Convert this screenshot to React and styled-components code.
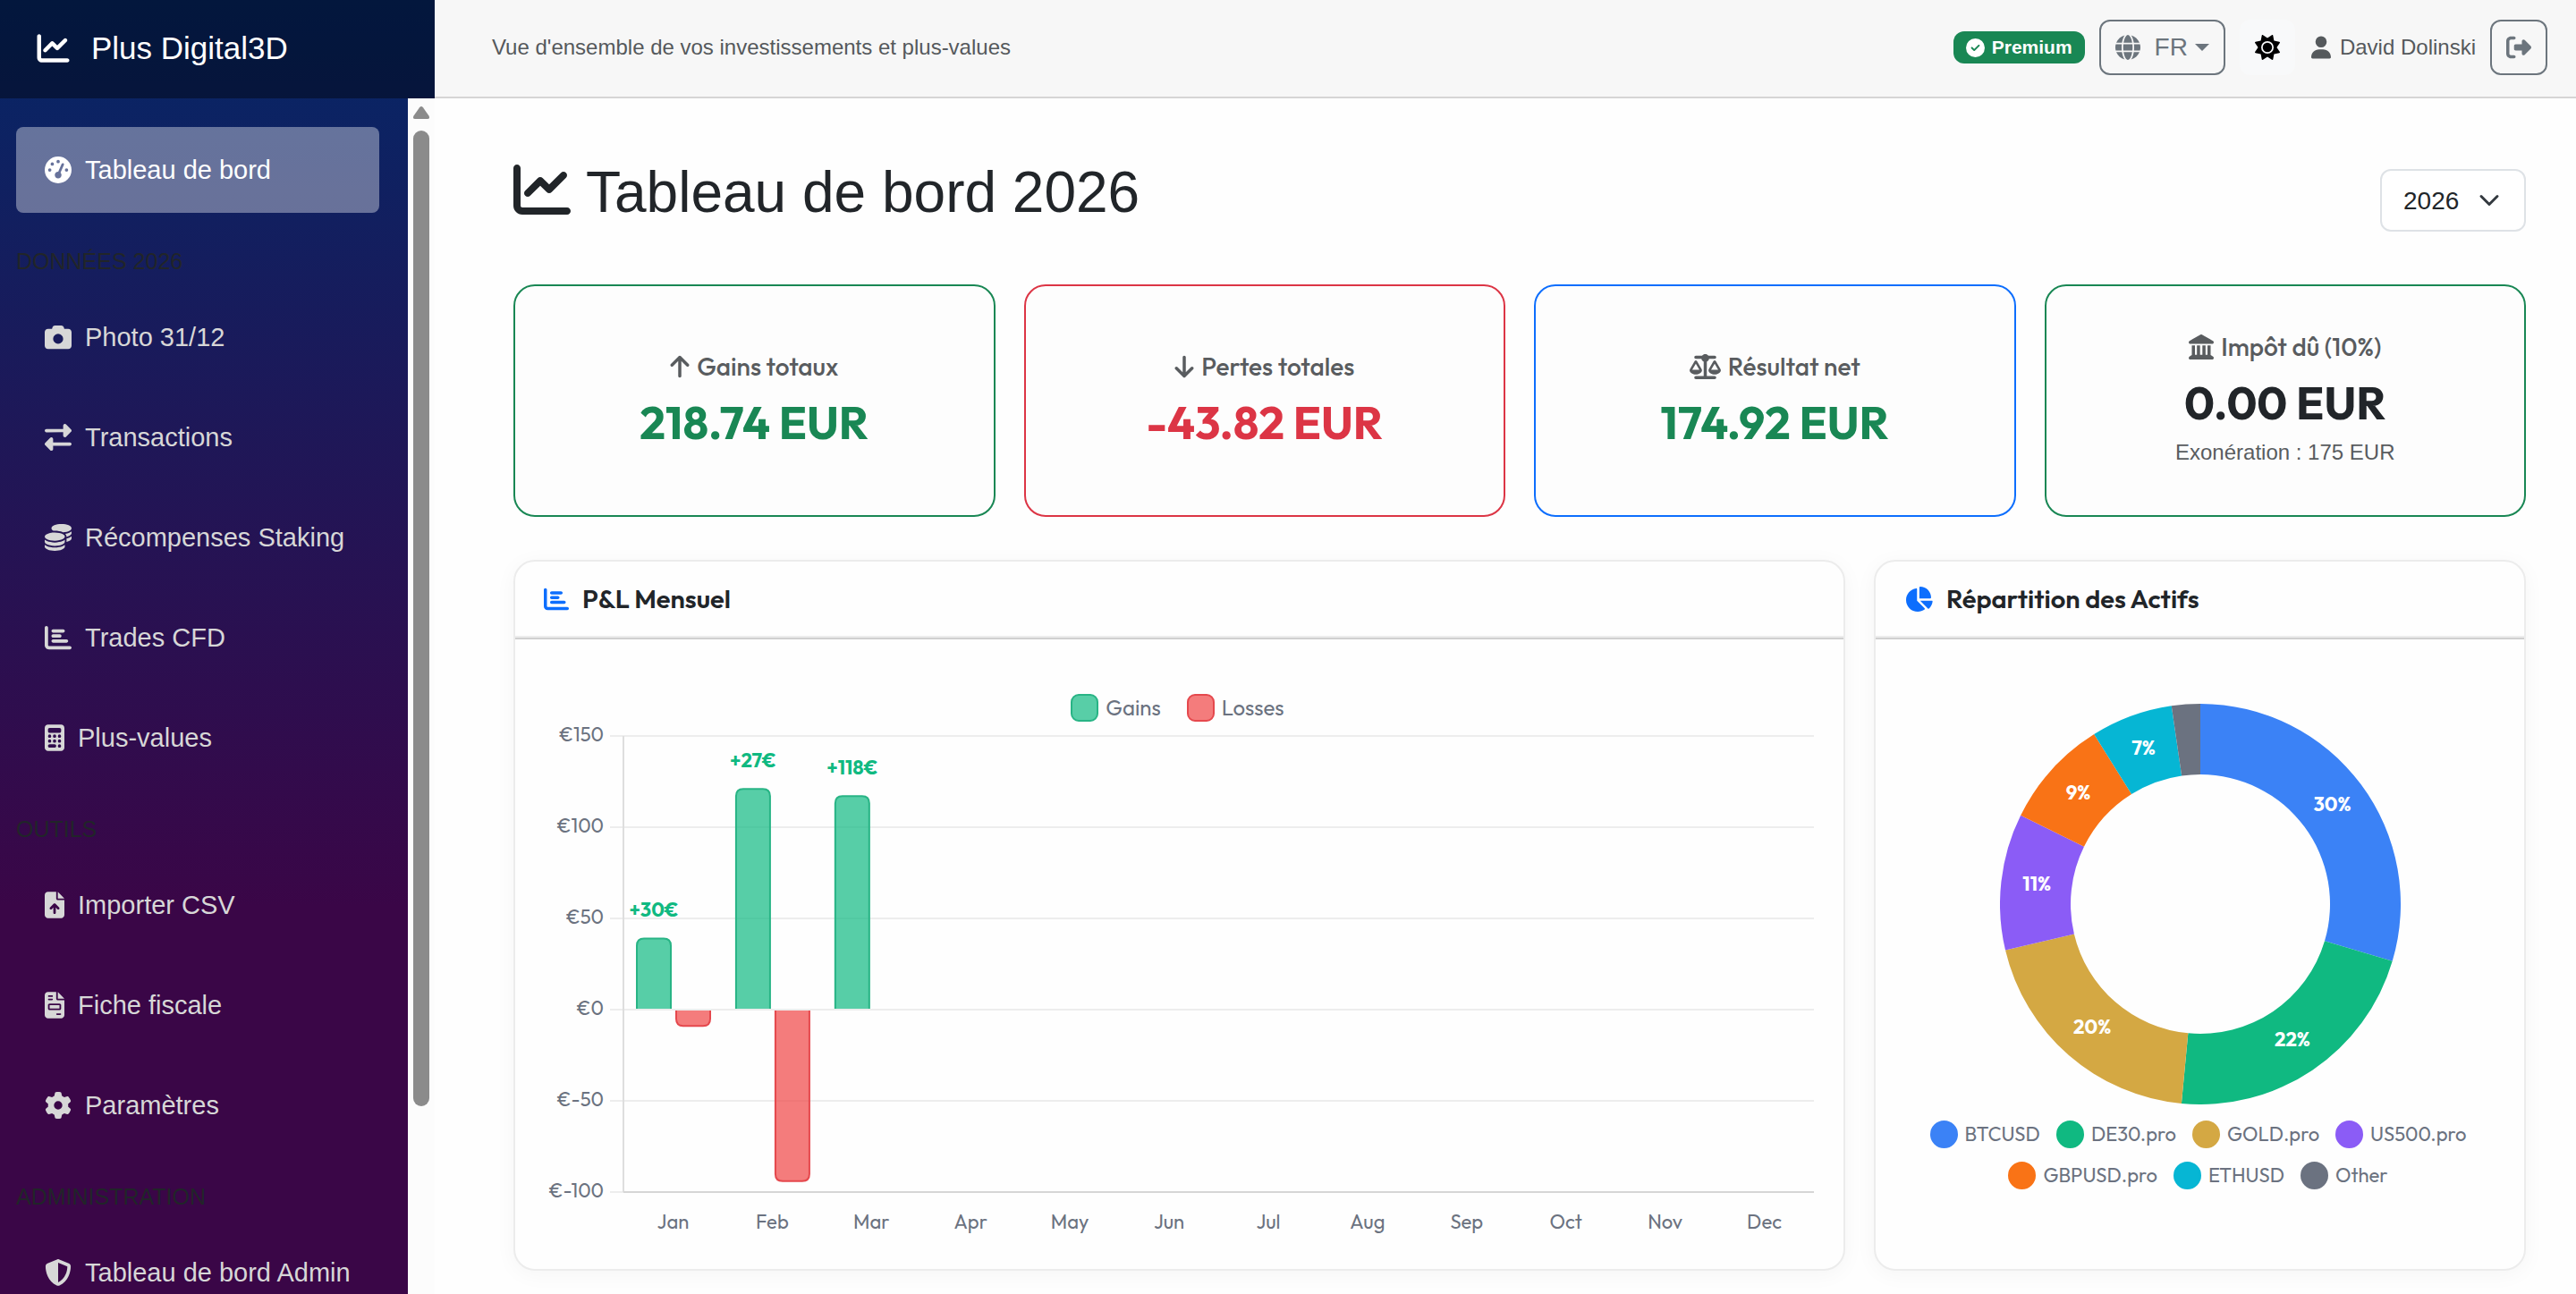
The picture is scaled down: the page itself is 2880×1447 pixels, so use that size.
import React, { useState } from 'react';
import styled, { createGlobalStyle } from 'styled-components';
import {
  FaArrowDown,
  FaArrowUp,
  FaCalculator,
  FaCamera,
  FaChartBar,
  FaChartLine,
  FaChartPie,
  FaCircleCheck,
  FaCoins,
  FaFileArrowUp,
  FaFileInvoice,
  FaGaugeHigh,
  FaGear,
  FaGlobe,
  FaLandmark,
  FaRightFromBracket,
  FaRightLeft,
  FaScaleBalanced,
  FaShieldHalved,
  FaSun,
  FaUser,
} from 'react-icons/fa6';

const sans = '"Liberation Sans", Arial, sans-serif';
const display = 'Outfit, Lato, "Liberation Sans", sans-serif';

const GlobalStyle = createGlobalStyle`
  *, *::before, *::after {
    box-sizing: border-box;
  }

  body {
    margin: 0;
    background-color: #fefefe;
    color: #212529;
    font-family: ${sans};
    font-size: 28px;
  }

  button, select {
    font: inherit;
    color: inherit;
    margin: 0;
    cursor: pointer;
  }

  svg {
    flex-shrink: 0;
  }
`

const Page = styled.div`
  display: flex;
  align-items: flex-start;
`

/* ---- sidebar ---- */

const Sidebar = styled.aside`
  position: sticky;
  top: 0;
  flex: 0 0 486px;
  height: 100vh;
  display: flex;
  flex-direction: column;
  overflow: hidden;
  background-image: linear-gradient(180deg, #052767 0%, #3a0647 70%);
`

const Brand = styled.a`
  flex: 0 0 110px;
  display: flex;
  align-items: center;
  gap: 24px;
  padding: 0 41px 2px;
  background-color: rgba(0, 0, 0, 0.4);
  color: #fff;
  font-size: 35px;
  text-decoration: none;

  svg {
    width: 37px;
    height: 36px;
  }
`

const SidebarBody = styled.div`
  flex: 1;
  min-height: 0;
  display: flex;
`

const Nav = styled.nav`
  flex: 1;
  overflow: hidden;
  padding: 32px 32px 0 18px;
`

const NavHeading = styled.h2`
  margin: 0;
  height: 75px;
  line-height: 77px;
  font-size: 25px;
  font-weight: 400;
  text-transform: uppercase;
  color: #212529;
`

const NavItem = styled.a`
  display: flex;
  align-items: center;
  gap: 15px;
  height: 96px;
  margin-bottom: 16px;
  padding: 0 32px;
  border-radius: 8px;
  background-color: ${props => props.$active ? 'rgba(255, 255, 255, 0.37)' : 'transparent'};
  color: ${props => props.$active ? '#fff' : '#d7d7d7'};
  font-size: 29px;
  text-decoration: none;
  white-space: nowrap;

  svg {
    width: ${props => props.$narrow ? 22 : 30}px;
    height: 30px;
  }
`

const ScrollTrack = styled.div`
  flex: 0 0 30px;
  display: flex;
  flex-direction: column;
  align-items: center;
  padding: 9px 0 210px;
  background-color: #fcfcfc;
`

const ScrollThumb = styled.div`
  flex: 1;
  width: 18px;
  margin-top: 13px;
  border-radius: 9px;
  background-color: #8b8b8b;
`

/* ---- top bar ---- */

const Main = styled.main`
  flex: 1;
  min-width: 0;
`

const TopBar = styled.header`
  display: flex;
  align-items: center;
  gap: 16px;
  height: 110px;
  padding: 0 32px 2px 64px;
  background-color: #f7f7f7;
  border-bottom: 2px solid #d6d5d5;
  color: #55595c;
  font-size: 24px;
`

const Tagline = styled.span`
  flex: 1;
`

const Badge = styled.span`
  display: flex;
  align-items: center;
  gap: 8px;
  height: 36px;
  padding: 0 14px;
  border-radius: 12px;
  background-color: #198754;
  color: #fff;
  font-size: 21px;
  font-weight: 700;
`

const OutlineButton = styled.button`
  display: flex;
  align-items: center;
  gap: 16px;
  height: 62px;
  padding: 0 16px;
  border: 2px solid #6c757d;
  border-radius: 12px;
  background-color: transparent;
  color: #6c757d;
  font-size: 28px;
`

const Caret = styled.span`
  margin-left: -8px;
  border-top: 8px solid currentColor;
  border-left: 8px solid transparent;
  border-right: 8px solid transparent;
`

const ThemeButton = styled.button`
  display: flex;
  align-items: center;
  height: 62px;
  padding: 0 17px;
  border: 0;
  border-radius: 12px;
  background-color: #f8f9fa;
  color: #000;
  font-size: 28px;
`

const User = styled.span`
  display: flex;
  align-items: center;
  gap: 10px;
  padding-left: 2px;

  svg {
    width: 22px;
    height: 26px;
  }
`

/* ---- content ---- */

const Content = styled.div`
  padding: 64px 56px 26px 88px;
`

const TitleRow = styled.div`
  display: flex;
  justify-content: space-between;
  align-items: flex-end;
  margin-bottom: 59px;
`

const Title = styled.h1`
  margin: 0 0 2px;
  font-size: 64px;
  font-weight: 400;
  line-height: 83px;

  svg {
    margin-right: 17px;
    vertical-align: -7px;
  }
`

const YearField = styled.div`
  position: relative;
  display: flex;
`

const YearSelect = styled.select`
  appearance: none;
  width: 163px;
  height: 70px;
  padding: 0 24px;
  border: 2px solid #dee2e6;
  border-radius: 12px;
  background-color: #fff;
  color: #212529;
`

const Chevron = styled.svg`
  position: absolute;
  top: 23px;
  right: 29px;
  width: 24px;
  height: 24px;
  pointer-events: none;
`

const Stats = styled.section`
  display: grid;
  grid-template-columns: repeat(4, 1fr);
  gap: 32px;
  margin-bottom: 48px;
`

const StatCard = styled.article`
  display: flex;
  flex-direction: column;
  align-items: center;
  justify-content: center;
  min-height: 260px;
  border: 2px solid ${props => props.$border};
  border-radius: 24px;
  background-color: #fdfdfd;
`

const StatLabel = styled.h2`
  display: flex;
  align-items: center;
  gap: 8px;
  margin: 0 0 14px;
  font-family: ${display};
  font-size: 28px;
  font-weight: 500;
  line-height: 34px;
  color: #595c5f;

  svg {
    width: ${props => props.$iconWidth}px;
    height: 28px;
  }
`

const StatValue = styled.p`
  margin: 0;
  font-family: ${display};
  font-size: 51px;
  font-weight: 700;
  line-height: 62px;
  color: ${props => props.$color};
`

const StatNote = styled.small`
  margin-top: 6px;
  font-size: 24px;
  line-height: 38px;
  color: #595c5f;
`

const Panels = styled.section`
  display: grid;
  grid-template-columns: 1489fr 729fr;
  gap: 32px;
`

const Panel = styled.article`
  min-width: 0;
  border: 2px solid #ececec;
  border-radius: 24px;
  background-color: #fefefe;
  box-shadow: 0 4px 24px rgba(0, 0, 0, 0.04);
`

const PanelHeader = styled.header`
  display: flex;
  align-items: center;
  gap: 15px;
  height: 87px;
  padding: 0 32px 2px;
  border-bottom: 2px solid #d0d0d0;
  box-shadow: inset 0 -2px 0 #ececec;

  svg {
    width: ${props => props.$iconWidth}px;
    height: 28px;
    color: #0d6efd;
  }
`

const PanelTitle = styled.h2`
  margin: 0;
  font-family: ${display};
  font-size: 29px;
  font-weight: 600;
`

const ChartBody = styled.div`
  padding: 60px 32px 32px;
`

const DonutBody = styled.div`
  padding: 72px 32px 32px;

  > svg {
    display: block;
    width: 448px;
    max-width: 100%;
    margin: 0 auto;
  }
`

const Plot = styled.svg`
  display: block;
  width: 100%;
  font-family: ${display};
  font-size: 22px;
  fill: #6b7280;
`

const Legend = styled.ul`
  display: flex;
  flex-wrap: wrap;
  justify-content: center;
  column-gap: ${props => props.$gap}px;
  margin: 0;
  padding: ${props => props.$top || 0}px 4px 0 0;
  list-style: none;
  font-family: ${display};
  font-size: ${props => props.$size}px;
  color: #6b7280;
`

const LegendItem = styled.li`
  display: flex;
  align-items: center;
  gap: 8px;
  height: ${props => props.$height}px;
`

const Swatch = styled.span`
  width: 31px;
  height: 31px;
  border: 2px solid ${props => props.$border || props.$color};
  border-radius: ${props => props.$round ? '50%' : '9px'};
  background-color: ${props => props.$color};
`

const navGroups = [
  {
    items: [{ label: 'Tableau de bord', icon: FaGaugeHigh, active: true }],
  },
  {
    heading: 'Données 2026',
    items: [
      { label: 'Photo 31/12', icon: FaCamera },
      { label: 'Transactions', icon: FaRightLeft },
      { label: 'Récompenses Staking', icon: FaCoins },
      { label: 'Trades CFD', icon: FaChartBar },
      { label: 'Plus-values', icon: FaCalculator, narrow: true },
    ],
  },
  {
    heading: 'Outils',
    items: [
      { label: 'Importer CSV', icon: FaFileArrowUp, narrow: true },
      { label: 'Fiche fiscale', icon: FaFileInvoice, narrow: true },
      { label: 'Paramètres', icon: FaGear },
    ],
  },
  {
    heading: 'Administration',
    items: [{ label: 'Tableau de bord Admin', icon: FaShieldHalved }],
  },
];

const stats = [
  { label: 'Gains totaux', icon: FaArrowUp, iconWidth: 22, value: '218.74 EUR', color: '#198754', border: '#198754' },
  { label: 'Pertes totales', icon: FaArrowDown, iconWidth: 22, value: '-43.82 EUR', color: '#dc3545', border: '#dc3545' },
  { label: 'Résultat net', icon: FaScaleBalanced, iconWidth: 35, value: '174.92 EUR', color: '#198754', border: '#0d6efd' },
  { label: 'Impôt dû (10%)', icon: FaLandmark, iconWidth: 28, value: '0.00 EUR', color: '#212529', border: '#198754', note: 'Exonération : 175 EUR' },
];

const months = ['Jan', 'Feb', 'Mar', 'Apr', 'May', 'Jun', 'Jul', 'Aug', 'Sep', 'Oct', 'Nov', 'Dec'];

const profits = [
  { gain: 39, loss: 9, label: '+30€' },
  { gain: 121, loss: 94, label: '+27€' },
  { gain: 117, loss: 0, label: '+118€' },
];

const assets = [
  { name: 'BTCUSD', share: 29.6, color: '#3b82f6' },
  { name: 'DE30.pro', share: 21.9, color: '#10b981' },
  { name: 'GOLD.pro', share: 19.8, color: '#d4a843' },
  { name: 'US500.pro', share: 11, color: '#8b5cf6' },
  { name: 'GBPUSD.pro', share: 8.8, color: '#f97316' },
  { name: 'ETHUSD', share: 6.6, color: '#06b6d4' },
  { name: 'Other', share: 2.3, color: '#6b7280' },
];

const gainColor = '#58cea7';
const gainBorder = '#28b485';
const lossColor = '#f47c7c';
const lossBorder = '#e5484d';

function ProfitChart() {
  const left = 89;
  const right = 1420;
  const step = (right - left) / 12;
  const y = value => 322 - value * 2.04;

  // bar outline with the two corners away from the zero line rounded
  const bar = (x, value) => {
    const end = y(value);
    const r = value > 0 ? 8 : -8;
    const zero = value > 0 ? 321 : 323;
    return `M${x} ${zero}V${end + r}Q${x} ${end} ${x + 8} ${end}H${x + 30}Q${x + 38} ${end} ${x + 38} ${end + r}V${zero}`;
  };

  return (
    <Plot viewBox="0 0 1421 580" role="img" aria-label="P&L Mensuel">
      {[150, 100, 50, 0, -50, -100].map(tick => (
        <g key={tick}>
          <line x1="74" x2={right} y1={y(tick)} y2={y(tick)} stroke="#ededed" strokeWidth="2" />
          <text x="67" y={y(tick) + 6} textAnchor="end">€{tick}</text>
        </g>
      ))}
      <line x1={left} x2={left} y1={y(150)} y2={y(-100)} stroke="#dedede" strokeWidth="2" />
      <line x1={left} x2={right} y1={y(-100)} y2={y(-100)} stroke="#d6d6d6" strokeWidth="2" />
      {months.map((month, i) => (
        <text key={month} x={left + step * (i + 0.5)} y="567" textAnchor="middle">{month}</text>
      ))}
      {profits.map((item, i) => {
        const x = left + step * i + 15;
        return (
          <g key={item.label}>
            <path d={bar(x, item.gain)} fill="#10b981" fillOpacity="0.7" stroke={gainBorder} strokeWidth="2" />
            {item.loss > 0 && (
              <path d={bar(x + 44, -item.loss)} fill="#ef4444" fillOpacity="0.7" stroke={lossBorder} strokeWidth="2" />
            )}
            <text x={x + 19} y={y(item.gain) - 24} textAnchor="middle" fontWeight="700" fill="#10b981">{item.label}</text>
          </g>
        );
      })}
    </Plot>
  );
}

function DonutChart() {
  const point = (percent, radius) => {
    const angle = (percent / 100) * Math.PI * 2;
    return [224 + radius * Math.sin(angle), 224 - radius * Math.cos(angle)];
  };
  let start = 0;

  return (
    <Plot viewBox="0 0 448 448" role="img" aria-label="Répartition des Actifs">
      {assets.map(asset => {
        const end = start + asset.share;
        const outer = [point(start, 224), point(end, 224)];
        const inner = [point(end, 145), point(start, 145)];
        const [x, y] = point(start + asset.share / 2, 184);
        start = end;
        return (
          <g key={asset.name}>
            <path
              d={`M${outer[0]}A224 224 0 0 1 ${outer[1]}L${inner[0]}A145 145 0 0 0 ${inner[1]}Z`}
              fill={asset.color}
            />
            {asset.share > 5 && (
              <text x={x} y={y + 6} textAnchor="middle" fontWeight="700" fill="#fff">
                {Math.round(asset.share)}%
              </text>
            )}
          </g>
        );
      })}
    </Plot>
  );
}

function App() {
  const [year, setYear] = useState('2026');

  return (
    <>
      <GlobalStyle />
      <Page>
        <Sidebar>
          <Brand href="#">
            <FaChartLine />
            Plus Digital3D
          </Brand>
          <SidebarBody>
            <Nav>
              {navGroups.map((group, i) => (
                <React.Fragment key={i}>
                  {group.heading && <NavHeading>{group.heading}</NavHeading>}
                  {group.items.map(({ label, icon: Icon, active, narrow }) => (
                    <NavItem key={label} href="#" $active={active} $narrow={narrow}>
                      <Icon />
                      {label}
                    </NavItem>
                  ))}
                </React.Fragment>
              ))}
            </Nav>
            <ScrollTrack aria-hidden="true">
              <svg width="18" height="14" viewBox="0 0 18 14" fill="#8b8b8b">
                <path d="M7 1.2Q9-1 11 1.2L17.500 10.500Q19 14 16 14H2Q-1 14 .5 10.500Z" />
              </svg>
              <ScrollThumb />
            </ScrollTrack>
          </SidebarBody>
        </Sidebar>

        <Main>
          <TopBar>
            <Tagline>Vue d'ensemble de vos investissements et plus-values</Tagline>
            <Badge><FaCircleCheck />Premium</Badge>
            <OutlineButton type="button">
              <FaGlobe />
              FR
              <Caret />
            </OutlineButton>
            <ThemeButton type="button" aria-label="Thème"><FaSun /></ThemeButton>
            <User><FaUser />David Dolinski</User>
            <OutlineButton type="button" aria-label="Déconnexion"><FaRightFromBracket /></OutlineButton>
          </TopBar>

          <Content>
            <TitleRow>
              <Title><FaChartLine />Tableau de bord {year}</Title>
              <YearField>
                <YearSelect aria-label="Année" value={year} onChange={e => setYear(e.target.value)}>
                  <option>2026</option>
                  <option>2025</option>
                  <option>2024</option>
                </YearSelect>
                <Chevron viewBox="0 0 16 16" fill="none" stroke="#343a40" strokeWidth="2" strokeLinecap="round" strokeLinejoin="round">
                  <path d="m2 5 6 6 6-6" />
                </Chevron>
              </YearField>
            </TitleRow>

            <Stats>
              {stats.map(({ label, icon: Icon, iconWidth, value, color, border, note }) => (
                <StatCard key={label} $border={border}>
                  <StatLabel $iconWidth={iconWidth}><Icon />{label}</StatLabel>
                  <StatValue $color={color}>{value}</StatValue>
                  {note && <StatNote>{note}</StatNote>}
                </StatCard>
              ))}
            </Stats>

            <Panels>
              <Panel>
                <PanelHeader $iconWidth={28}>
                  <FaChartBar />
                  <PanelTitle>P&amp;L Mensuel</PanelTitle>
                </PanelHeader>
                <ChartBody>
                  <Legend $gap={29} $size={24}>
                    <LegendItem $height={32}><Swatch $color={gainColor} $border={gainBorder} />Gains</LegendItem>
                    <LegendItem $height={32}><Swatch $color={lossColor} $border={lossBorder} />Losses</LegendItem>
                  </Legend>
                  <ProfitChart />
                </ChartBody>
              </Panel>

              <Panel>
                <PanelHeader $iconWidth={32}>
                  <FaChartPie />
                  <PanelTitle>Répartition des Actifs</PanelTitle>
                </PanelHeader>
                <DonutBody>
                  <DonutChart />
                  <Legend $gap={18} $top={10} $size={22}>
                    {assets.map(asset => (
                      <LegendItem key={asset.name} $height={46}>
                        <Swatch $round $color={asset.color} />
                        {asset.name}
                      </LegendItem>
                    ))}
                  </Legend>
                </DonutBody>
              </Panel>
            </Panels>
          </Content>
        </Main>
      </Page>
    </>
  );
}

export default App;
